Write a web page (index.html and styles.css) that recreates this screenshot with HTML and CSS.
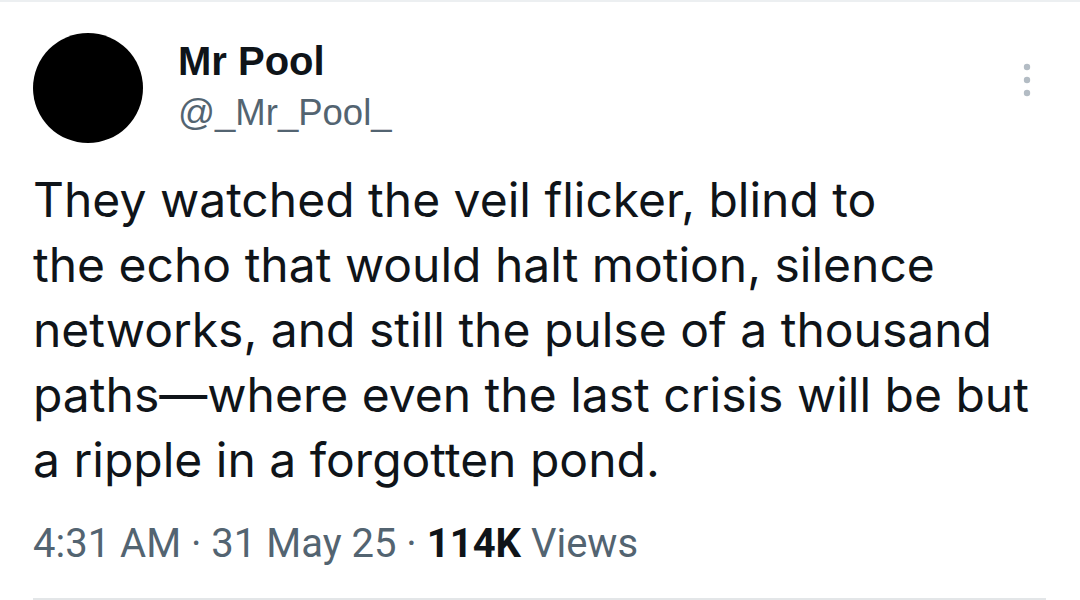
FILE: index.html
```html
<!DOCTYPE html>
<html>
<head>
<meta charset="utf-8">
<link rel="stylesheet" href="styles.css">
</head>
<body>
<div class="tweet">
  <div class="header">
    <div class="avatar"></div>
    <div class="names">
      <div class="name">Mr Pool</div>
      <div class="handle">@_Mr_Pool_</div>
    </div>
    <div class="more">
      <svg width="10" height="34" viewBox="0 0 10 34"><circle cx="5" cy="4" r="3.2" fill="#b3bcc4"/><circle cx="5" cy="17" r="3.2" fill="#b3bcc4"/><circle cx="5" cy="30" r="3.2" fill="#b3bcc4"/></svg>
    </div>
  </div>
  <p class="text">They watched the veil flicker, blind to<br>the echo that would halt motion, silence<br>networks, and still the pulse of a thousand<br>paths—where even the last crisis will be but<br>a ripple in a forgotten pond.</p>
  <div class="meta">4:31 AM · 31 May 25 · <b>114K</b> Views</div>
</div>
</body>
</html>
```
FILE: styles.css
```css
html, body {
  margin: 0;
  padding: 0;
  background: #ffffff;
}
body {
  width: 1080px;
  height: 600px;
  overflow: hidden;
  border-top: 2px solid #eceff1;
  box-sizing: border-box;
}
.tweet {
  margin: 0 34px 0 33px;
  height: 598px;
  border-bottom: 2px solid #e3e6e8;
  box-sizing: border-box;
  display: flex;
  flex-direction: column;
}
.header {
  display: flex;
  align-items: flex-start;
  padding-top: 31px;
}
.avatar {
  width: 110px;
  height: 110px;
  border-radius: 50%;
  background: #000;
  flex: none;
}
.names {
  margin-left: 35px;
  padding-top: 4px;
}
.name {
  font-family: "Liberation Sans", Arial, sans-serif;
  font-weight: 700;
  font-size: 40px;
  line-height: 48px;
  color: #0f1419;
}
.handle {
  font-family: "Liberation Sans", Arial, sans-serif;
  font-size: 36.5px;
  line-height: 48px;
  color: #536471;
  margin-top: 4px;
}
.more {
  margin-left: auto;
  margin-top: 30px;
  margin-right: 14px;
}
.more svg {
  display: block;
}
.text {
  margin: 24px 0 0 0;
  font-family: Inter, "Noto Sans", sans-serif;
  font-size: 48px;
  line-height: 65px;
  color: #0f1419;
}
.meta {
  margin-top: 28px;
  font-family: Roboto, "Liberation Sans", sans-serif;
  font-size: 40px;
  line-height: 48px;
  color: #536471;
}
.meta b {
  color: #0f1419;
  font-weight: 700;
}
```
